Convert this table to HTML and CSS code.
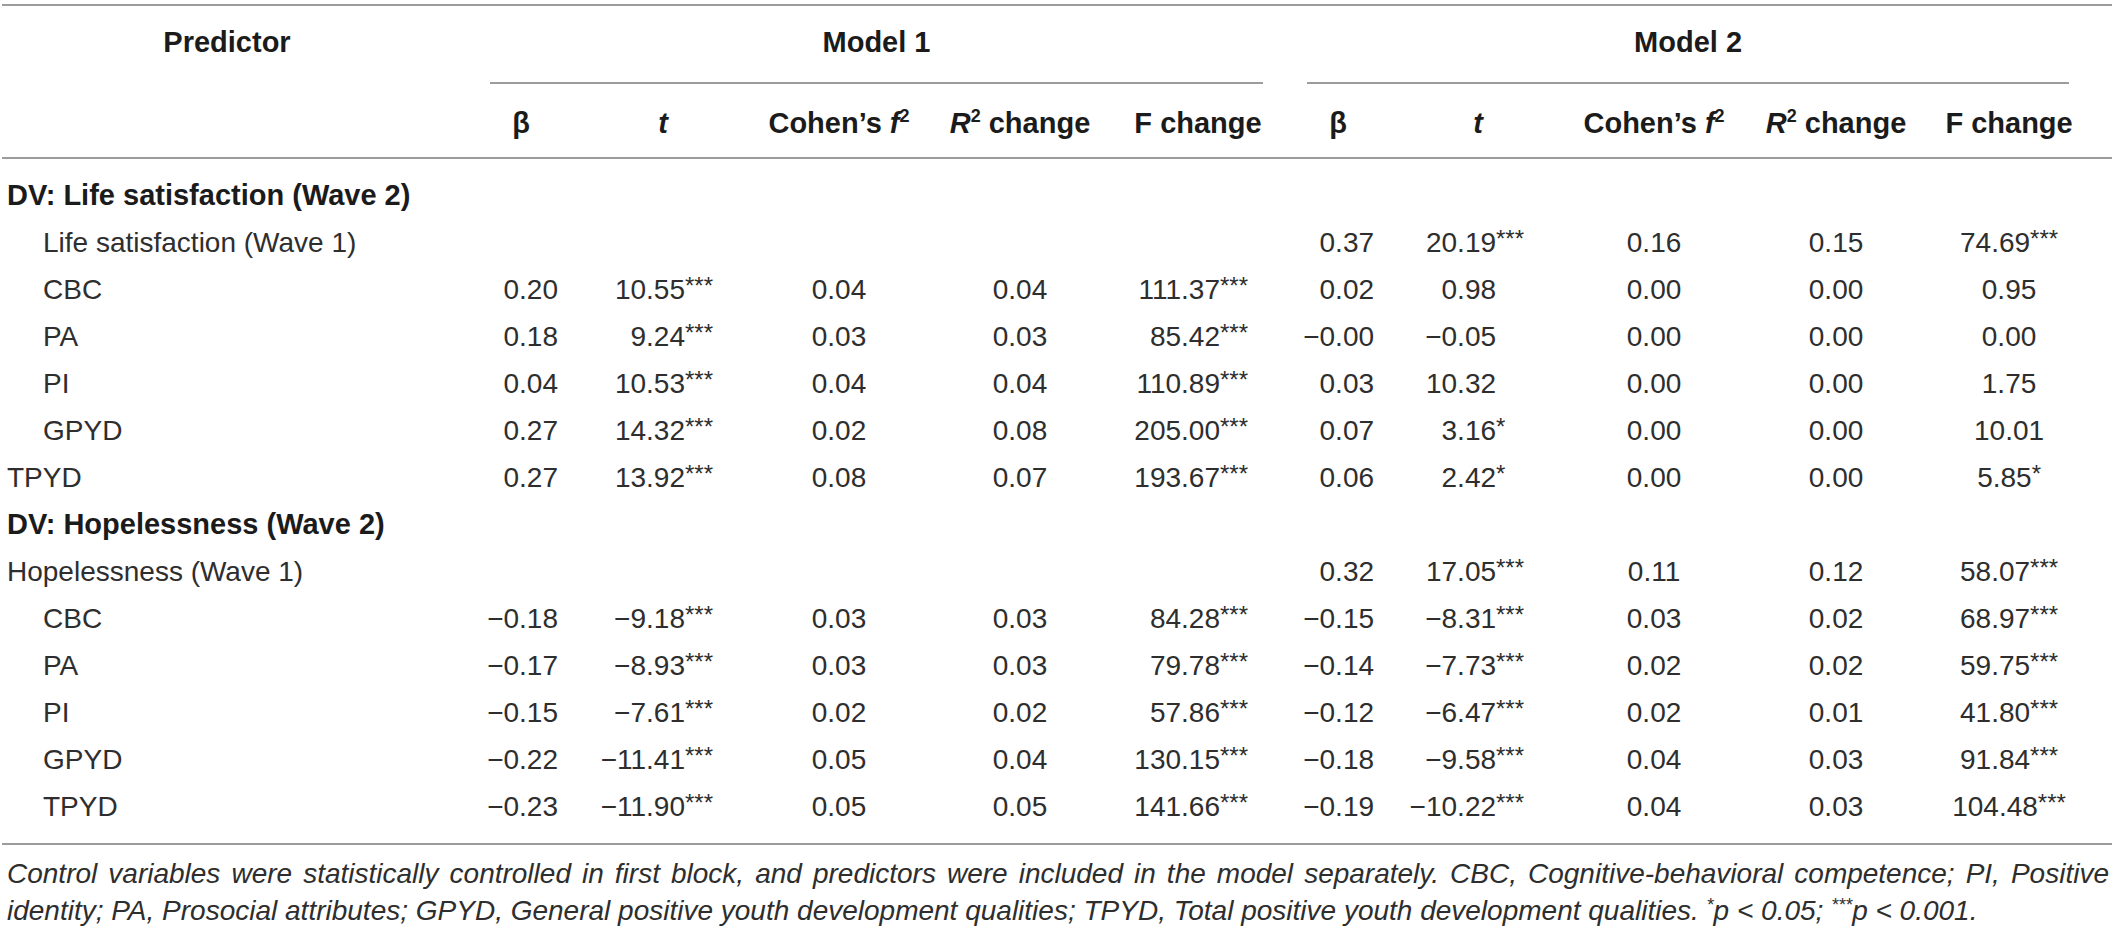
FILE: index.html
```html
<!DOCTYPE html>
<html lang="en">
<head>
<meta charset="utf-8">
<title>Regression table</title>
<link rel="stylesheet" href="styles.css">
</head>
<body>
<table class="tbl">
  <colgroup>
    <col class="w-pred"><col class="w-b1"><col class="w-t1"><col class="w-f1"><col class="w-r1"><col class="w-F1">
    <col class="w-b2"><col class="w-t2"><col class="w-f2"><col class="w-r2"><col class="w-F2">
  </colgroup>
  <thead>
    <tr class="top">
      <th rowspan="2" class="pred">Predictor</th>
      <th colspan="5" class="model"><div class="mrule m1">Model 1</div></th>
      <th colspan="5" class="model"><div class="mrule m2">Model 2</div></th>
    </tr>
    <tr class="sub">
      <th class="beta">β</th>
      <th><i>t</i></th>
      <th>Cohen’s <i>f</i><sup>2</sup></th>
      <th><i>R</i><sup>2</sup> change</th>
      <th>F change</th>
      <th class="beta">β</th>
      <th><i>t</i></th>
      <th>Cohen’s <i>f</i><sup>2</sup></th>
      <th><i>R</i><sup>2</sup> change</th>
      <th class="c10">F change</th>
    </tr>
  </thead>
  <tbody>
    <tr class="first">
      <td class="lab dv">DV: Life satisfaction (Wave 2)</td>
      <td></td><td></td><td></td><td></td><td></td><td></td><td></td><td></td><td></td><td></td>
    </tr>
    <tr>
      <td class="lab ind">Life satisfaction (Wave 1)</td>
      <td class="c1"></td><td class="c2"></td><td class="c3"></td><td class="c4"></td><td class="c5"></td>
      <td class="c6">0.37</td><td class="c7">20.19<span class="s">***</span></td><td class="c8">0.16</td><td class="c9">0.15</td><td class="c10">74.69<span class="s">***</span></td>
    </tr>
    <tr>
      <td class="lab ind">CBC</td>
      <td class="c1">0.20</td><td class="c2">10.55<span class="s">***</span></td><td class="c3">0.04</td><td class="c4">0.04</td><td class="c5">111.37<span class="s">***</span></td>
      <td class="c6">0.02</td><td class="c7">0.98<span class="s"></span></td><td class="c8">0.00</td><td class="c9">0.00</td><td class="c10">0.95</td>
    </tr>
    <tr>
      <td class="lab ind">PA</td>
      <td class="c1">0.18</td><td class="c2">9.24<span class="s">***</span></td><td class="c3">0.03</td><td class="c4">0.03</td><td class="c5">85.42<span class="s">***</span></td>
      <td class="c6">−0.00</td><td class="c7">−0.05<span class="s"></span></td><td class="c8">0.00</td><td class="c9">0.00</td><td class="c10">0.00</td>
    </tr>
    <tr>
      <td class="lab ind">PI</td>
      <td class="c1">0.04</td><td class="c2">10.53<span class="s">***</span></td><td class="c3">0.04</td><td class="c4">0.04</td><td class="c5">110.89<span class="s">***</span></td>
      <td class="c6">0.03</td><td class="c7">10.32<span class="s"></span></td><td class="c8">0.00</td><td class="c9">0.00</td><td class="c10">1.75</td>
    </tr>
    <tr>
      <td class="lab ind">GPYD</td>
      <td class="c1">0.27</td><td class="c2">14.32<span class="s">***</span></td><td class="c3">0.02</td><td class="c4">0.08</td><td class="c5">205.00<span class="s">***</span></td>
      <td class="c6">0.07</td><td class="c7">3.16<span class="s">*</span></td><td class="c8">0.00</td><td class="c9">0.00</td><td class="c10">10.01</td>
    </tr>
    <tr>
      <td class="lab">TPYD</td>
      <td class="c1">0.27</td><td class="c2">13.92<span class="s">***</span></td><td class="c3">0.08</td><td class="c4">0.07</td><td class="c5">193.67<span class="s">***</span></td>
      <td class="c6">0.06</td><td class="c7">2.42<span class="s">*</span></td><td class="c8">0.00</td><td class="c9">0.00</td><td class="c10">5.85<span class="s">*</span></td>
    </tr>
    <tr>
      <td class="lab dv">DV: Hopelessness (Wave 2)</td>
      <td></td><td></td><td></td><td></td><td></td><td></td><td></td><td></td><td></td><td></td>
    </tr>
    <tr>
      <td class="lab">Hopelessness (Wave 1)</td>
      <td class="c1"></td><td class="c2"></td><td class="c3"></td><td class="c4"></td><td class="c5"></td>
      <td class="c6">0.32</td><td class="c7">17.05<span class="s">***</span></td><td class="c8">0.11</td><td class="c9">0.12</td><td class="c10">58.07<span class="s">***</span></td>
    </tr>
    <tr>
      <td class="lab ind">CBC</td>
      <td class="c1">−0.18</td><td class="c2">−9.18<span class="s">***</span></td><td class="c3">0.03</td><td class="c4">0.03</td><td class="c5">84.28<span class="s">***</span></td>
      <td class="c6">−0.15</td><td class="c7">−8.31<span class="s">***</span></td><td class="c8">0.03</td><td class="c9">0.02</td><td class="c10">68.97<span class="s">***</span></td>
    </tr>
    <tr>
      <td class="lab ind">PA</td>
      <td class="c1">−0.17</td><td class="c2">−8.93<span class="s">***</span></td><td class="c3">0.03</td><td class="c4">0.03</td><td class="c5">79.78<span class="s">***</span></td>
      <td class="c6">−0.14</td><td class="c7">−7.73<span class="s">***</span></td><td class="c8">0.02</td><td class="c9">0.02</td><td class="c10">59.75<span class="s">***</span></td>
    </tr>
    <tr>
      <td class="lab ind">PI</td>
      <td class="c1">−0.15</td><td class="c2">−7.61<span class="s">***</span></td><td class="c3">0.02</td><td class="c4">0.02</td><td class="c5">57.86<span class="s">***</span></td>
      <td class="c6">−0.12</td><td class="c7">−6.47<span class="s">***</span></td><td class="c8">0.02</td><td class="c9">0.01</td><td class="c10">41.80<span class="s">***</span></td>
    </tr>
    <tr>
      <td class="lab ind">GPYD</td>
      <td class="c1">−0.22</td><td class="c2">−11.41<span class="s">***</span></td><td class="c3">0.05</td><td class="c4">0.04</td><td class="c5">130.15<span class="s">***</span></td>
      <td class="c6">−0.18</td><td class="c7">−9.58<span class="s">***</span></td><td class="c8">0.04</td><td class="c9">0.03</td><td class="c10">91.84<span class="s">***</span></td>
    </tr>
    <tr class="last">
      <td class="lab ind">TPYD</td>
      <td class="c1">−0.23</td><td class="c2">−11.90<span class="s">***</span></td><td class="c3">0.05</td><td class="c4">0.05</td><td class="c5">141.66<span class="s">***</span></td>
      <td class="c6">−0.19</td><td class="c7">−10.22<span class="s">***</span></td><td class="c8">0.04</td><td class="c9">0.03</td><td class="c10">104.48<span class="s">***</span></td>
    </tr>
  </tbody>
</table>
<p class="note">Control variables were statistically controlled in first block, and predictors were included in the model separately. CBC, Cognitive-behavioral competence; PI, Positive identity; PA, Prosocial attributes; GPYD, General positive youth development qualities; TPYD, Total positive youth development qualities. <sup>*</sup>p &lt; 0.05; <sup>***</sup>p &lt; 0.001.</p>
</body>
</html>
```

FILE: styles.css
```css
html, body {
  margin: 0;
  padding: 0;
  background: #ffffff;
}

body {
  color: #2e2e2e;
  font-family: "Liberation Sans", Arial, sans-serif;
}

.tbl {
  margin: 4px 0 0 2px;
  width: 2110px;
  table-layout: fixed;
  border-collapse: separate;
  border-spacing: 0;
  border-top: 2px solid #9c9c9c;
  border-bottom: 2px solid #9c9c9c;
  font-size: 28px;
}

.w-pred { width: 450px; }
.w-b1 { width: 138px; }
.w-t1 { width: 146px; }
.w-f1 { width: 206px; }
.w-r1 { width: 156px; }
.w-F1 { width: 200px; }
.w-b2 { width: 80px; }
.w-t2 { width: 200px; }
.w-f2 { width: 152px; }
.w-r2 { width: 212px; }
.w-F2 { width: 170px; }

th {
  padding: 0;
  font-weight: bold;
  font-size: 29px;
  color: #1b1b1b;
  white-space: nowrap;
}

th sup {
  font-size: 18px;
  line-height: 0;
  vertical-align: 11px;
}

.pred {
  vertical-align: top;
  text-align: center;
  line-height: 72px;
  border-bottom: 2px solid #9c9c9c;
}

.mrule {
  line-height: 72px;
  padding-bottom: 4px;
  border-bottom: 2px solid #9c9c9c;
  text-align: center;
}

.m1 { margin: 0 35px 0 38px; }
.m2 { margin: 0 43px 0 9px; }

.sub th {
  padding-top: 5px;
  line-height: 68px;
  text-align: center;
  border-bottom: 2px solid #9c9c9c;
}

.sub th.c10 { padding-right: 36px; }

td {
  padding: 0;
  line-height: 47px;
  white-space: nowrap;
}

tr.first td { padding-top: 13px; }
tr.last td { padding-bottom: 13px; }

.lab { text-align: left; padding-left: 5px; }
.lab.ind { padding-left: 41px; }
.dv { font-weight: bold; font-size: 29px; color: #1b1b1b; }

.c1 { text-align: right; padding-right: 32px; }
.c2 { text-align: right; padding-right: 23px; }
.c3 { text-align: center; }
.c4 { text-align: center; }
.c5 { text-align: right; padding-right: 50px; }
.c6 { text-align: right; padding-right: 4px; }
.c7 { text-align: right; padding-right: 51px; }
.c8 { text-align: center; }
.c9 { text-align: center; }
.c10 { text-align: center; padding-right: 36px; }

.s {
  font-size: 24px;
  line-height: 0;
  vertical-align: 5px;
}

.c7 .s {
  display: inline-block;
  width: 31px;
  text-align: left;
  line-height: 1;
}

.note {
  margin: 10px 0 0 0;
  padding-left: 7px;
  width: 2102px;
  font-size: 28px;
  font-style: italic;
  line-height: 37px;
  text-align: justify;
  color: #2e2e2e;
}

.note sup {
  font-size: 18px;
  line-height: 0;
  vertical-align: 9px;
}
```
